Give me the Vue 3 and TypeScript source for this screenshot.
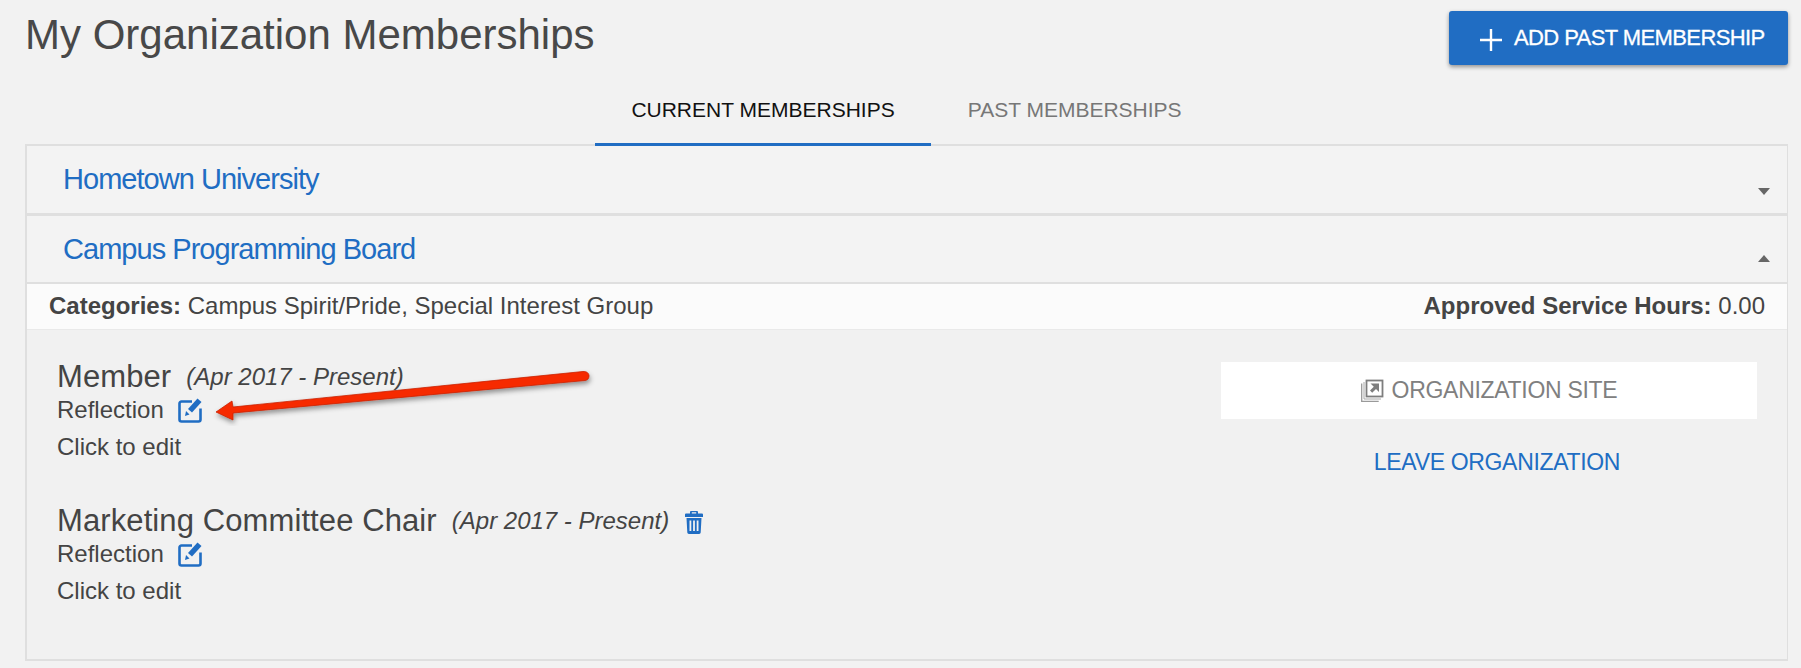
<script setup lang="ts">
interface Role {
  title: string
  dates: string
  removable: boolean
}

const roles: Role[] = [
  { title: 'Member', dates: '(Apr 2017 - Present)', removable: false },
  { title: 'Marketing Committee Chair', dates: '(Apr 2017 - Present)', removable: true },
]
</script>

<template>
  <div class="page">
    <header class="top">
      <h1 class="title">My Organization Memberships</h1>
      <button class="add-btn" type="button">
        <svg class="plus" viewBox="0 0 22 22" width="22" height="22" aria-hidden="true">
          <path d="M11 0v22M0 11h22" stroke="#fff" stroke-width="2.4" fill="none" />
        </svg>
        <span>ADD PAST MEMBERSHIP</span>
      </button>
    </header>

    <nav class="tabs">
      <a class="tab active">CURRENT MEMBERSHIPS</a>
      <a class="tab">PAST MEMBERSHIPS</a>
    </nav>

    <section class="accordion">
      <div class="panel-head">
        <span class="org">Hometown University</span>
        <span class="caret down"></span>
      </div>
      <div class="panel-head second">
        <span class="org">Campus Programming Board</span>
        <span class="caret up"></span>
      </div>

      <div class="meta">
        <span><b>Categories:</b> Campus Spirit/Pride, Special Interest Group</span>
        <span><b>Approved Service Hours:</b> 0.00</span>
      </div>

      <div class="body">
        <div class="roles">
          <article v-for="role in roles" :key="role.title" class="role">
            <div class="role-line">
              <span class="role-title">{{ role.title }}</span>
              <em class="dates">{{ role.dates }}</em>
              <svg v-if="role.removable" class="trash" viewBox="0 0 18 23" width="18" height="23" aria-hidden="true">
                <path fill="#206dc3" d="M6 0h6a1 1 0 0 1 1 1v1.5h4a1 1 0 0 1 1 1V6H0V3.500a1 1 0 0 1 1-1h4V1a1 1 0 0 1 1-1zm.8 1.300v1.200h4.400V1.300z" />
                <path fill="#206dc3" fill-rule="evenodd" d="M1.500 7h15l-.8 14.500A1.600 1.600 0 0 1 14.100 23H3.900a1.600 1.600 0 0 1-1.600-1.500zM4.500 9.500v10.500h1.800V9.500zm3.600 0v10.500h1.800V9.500zm3.600 0v10.500h1.800V9.500z" />
              </svg>
            </div>
            <div class="reflection">
              <span>Reflection</span>
              <svg class="edit" viewBox="0 0 25 25" width="25" height="25" aria-hidden="true">
                <path d="M14 3.500H3.500a2 2 0 0 0-2 2v16a2 2 0 0 0 2 2h17a2 2 0 0 0 2-2V10.500" fill="none" stroke="#206dc3" stroke-width="2.600" />
                <path d="M19.500 0.500l4 3.500-9.500 10.500-4-3.500z" fill="#206dc3" />
                <path d="M8 13l3.500 3.500-4.500 1.500z" fill="#206dc3" />
              </svg>
            </div>
            <p class="click">Click to edit</p>
          </article>
        </div>

        <aside class="actions">
          <a class="site">
            <svg viewBox="0 0 23 23" width="23" height="23" aria-hidden="true">
              <rect x="5.500" y="1.500" width="16" height="16" fill="none" stroke="#7e7e7e" stroke-width="1.800" />
              <path d="M.7 4.500v18h17" fill="none" stroke="#9a9a9a" stroke-width="1.300" />
              <path d="M3 3v17h17" fill="none" stroke="#a8a8a8" stroke-width="1" />
              <path d="M9.500 4.500h8.500V13l-3-3-3.800 3.800-2.200-2.200 3.800-3.800z" fill="#7e7e7e" />
            </svg>
            <span>ORGANIZATION SITE</span>
          </a>
          <a class="leave">LEAVE ORGANIZATION</a>
        </aside>
      </div>
    </section>

    <svg class="arrow" viewBox="0 0 400 60" width="400" height="60" aria-hidden="true">
      <defs>
        <filter id="arrow-shadow" x="-5%" y="-30%" width="110%" height="180%">
          <feDropShadow dx="1" dy="3" stdDeviation="2.500" flood-color="#000" flood-opacity="0.4" />
        </filter>
      </defs>
      <path
        d="M386 5.500 C390 5.200 392 7.500 392 10 C392 12.500 390.500 14.200 388 14.500 L36 47 L36 54 L19 46 L35 35 L36 41 Z"
        fill="#f62a00"
        stroke="#c92200"
        stroke-width="0.800"
        filter="url(#arrow-shadow)"
      />
    </svg>
  </div>
</template>

<style>
html,
body {
  margin: 0;
  background: #f1f1f1;
}
</style>

<style scoped>
.page {
  position: relative;
  box-sizing: border-box;
  width: 1801px;
  height: 668px;
  padding: 0 13px 0 25px;
  background: #f2f2f2;
  font-family: "Liberation Sans", Arial, sans-serif;
  color: #444;
  overflow: hidden;
}

.top {
  display: flex;
  justify-content: space-between;
  align-items: flex-start;
  height: 78px;
  padding-top: 11px;
  box-sizing: border-box;
}

.title {
  margin: 1px 0 0 0;
  font-size: 42px;
  line-height: 46px;
  font-weight: 400;
  color: #484848;
}

.add-btn {
  display: flex;
  align-items: center;
  justify-content: flex-start;
  gap: 12px;
  width: 339px;
  height: 54px;
  border: 0;
  border-radius: 3px;
  background: #206dc3;
  color: #fff;
  font: 400 22px "Liberation Sans", Arial, sans-serif;
  letter-spacing: -0.6px;
  -webkit-text-stroke: 0.3px #fff;
  box-shadow: 0 2px 4px rgba(0, 0, 0, 0.4);
  padding: 0 0 0 31px;
}

.plus {
  margin-top: 3px;
}

.tabs {
  display: flex;
  justify-content: center;
  height: 68px;
  box-sizing: border-box;
  position: relative;
  z-index: 1;
}

.tab {
  box-sizing: border-box;
  padding: 19px 36.500px 0;
  font-size: 21px;
  line-height: 26px;
  color: #777;
  border-bottom: 3px solid transparent;
}

.tab.active {
  color: #111;
  border-bottom-color: #206dc3;
}

.accordion {
  margin-top: -2px;
  border: 2px solid #dfdfdf;
  border-width: 2px 1px 2px 2px;
}

.panel-head {
  position: relative;
  display: flex;
  align-items: center;
  height: 67px;
  padding-left: 36px;
  background: #f3f3f3;
  border-bottom: 3px solid #dfdfdf;
  box-sizing: content-box;
}

.panel-head.second {
  height: 66px;
  border-bottom-width: 2px;
}

.org {
  font-size: 29px;
  letter-spacing: -0.97px;
  color: #206dc3;
}

.caret {
  position: absolute;
  right: 17px;
  width: 0;
  height: 0;
  border-left: 6.500px solid transparent;
  border-right: 6.500px solid transparent;
}

.caret.down {
  top: 42px;
  border-top: 7px solid #666;
}

.caret.up {
  top: 39px;
  border-bottom: 7px solid #666;
}

.meta {
  display: flex;
  justify-content: space-between;
  align-items: center;
  height: 45px;
  padding: 0 22px 2px 22px;
  box-sizing: border-box;
  background: #fbfbfb;
  font-size: 24px;
  color: #444;
}

.body {
  display: flex;
  justify-content: space-between;
  height: 330px;
  box-sizing: border-box;
  background: #f1f1f1;
  border-top: 1px solid #e9e9e9;
  padding: 31px 30px 0 30px;
}

.role {
  margin-bottom: 38px;
}

.role-line {
  display: flex;
  align-items: center;
  height: 32px;
}

.role-title {
  font-size: 31px;
  letter-spacing: 0.1px;
}

.dates {
  margin-left: 15px;
  font-size: 24px;
}

.trash {
  margin-left: 16px;
  margin-top: 2px;
}

.reflection {
  display: flex;
  align-items: center;
  gap: 14px;
  height: 34px;
  font-size: 24px;
}

.click {
  margin: 0;
  height: 40px;
  line-height: 40px;
  font-size: 24px;
}

.actions {
  display: flex;
  flex-direction: column;
  align-items: center;
  width: 536px;
  margin-top: 1px;
}

.site {
  display: flex;
  align-items: center;
  justify-content: center;
  gap: 8px;
  width: 100%;
  height: 57px;
  background: #fff;
  color: #808080;
  font-size: 23px;
  letter-spacing: -0.3px;
}

.leave {
  margin: 30px 0 0 16px;
  font-size: 23px;
  letter-spacing: -0.33px;
  color: #206dc3;
}

.arrow {
  position: absolute;
  left: 197px;
  top: 366px;
}
</style>
